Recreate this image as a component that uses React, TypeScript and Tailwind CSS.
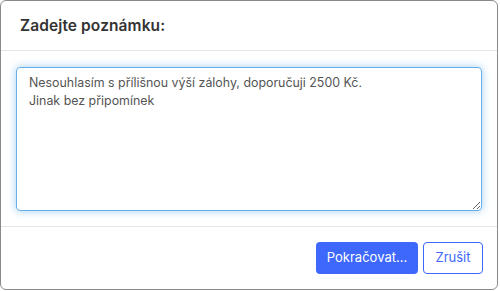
import React from 'react';

const NoteDialog = () => {
  return (
    <div className="w-[500px] h-[291px] bg-white" style={{ fontFamily: 'Inter, "Liberation Sans", sans-serif' }}>
      <div className="w-[498px] h-[290px] flex flex-col bg-white border border-[#8a8a8a] rounded-[6px] overflow-hidden">
        <div className="h-[50px] shrink-0 flex items-center px-[19px] border-b border-[#e5e5e5]">
          <h4 className="text-[15.5px] font-semibold text-[#333] tracking-[0.1px]">Zadejte poznámku:</h4>
        </div>
        <div className="px-[15px] pt-[16px] pb-[15px]">
          <textarea
            className="block w-full h-[144px] rounded-[4px] border border-[#66afe9] px-[12px] py-[6px] text-[12.4px] leading-[18px] text-[#555] outline-none shadow-[0_0_8px_rgba(102,175,233,0.6)] resize-y"
            style={{ fontFamily: 'Inter, "Liberation Sans", sans-serif' }}
            defaultValue={'Nesouhlasím s přílišnou výší zálohy, doporučuji 2500 Kč.\nJinak bez připomínek'}
          />
        </div>
        <div className="flex-1 border-t border-[#e5e5e5] flex justify-end items-start gap-[5px] pt-[15px] px-[14px]">
          <button className="h-[32px] w-[102px] rounded-[4px] bg-[#3d68fb] text-white text-[13px]">Pokračovat...</button>
          <button className="h-[32px] w-[60px] rounded-[4px] border border-[#3d68fb] bg-white text-[#3d68fb] text-[13px]">Zrušit</button>
        </div>
      </div>
    </div>
  );
};

export default function App() {
  return <NoteDialog />;
}
